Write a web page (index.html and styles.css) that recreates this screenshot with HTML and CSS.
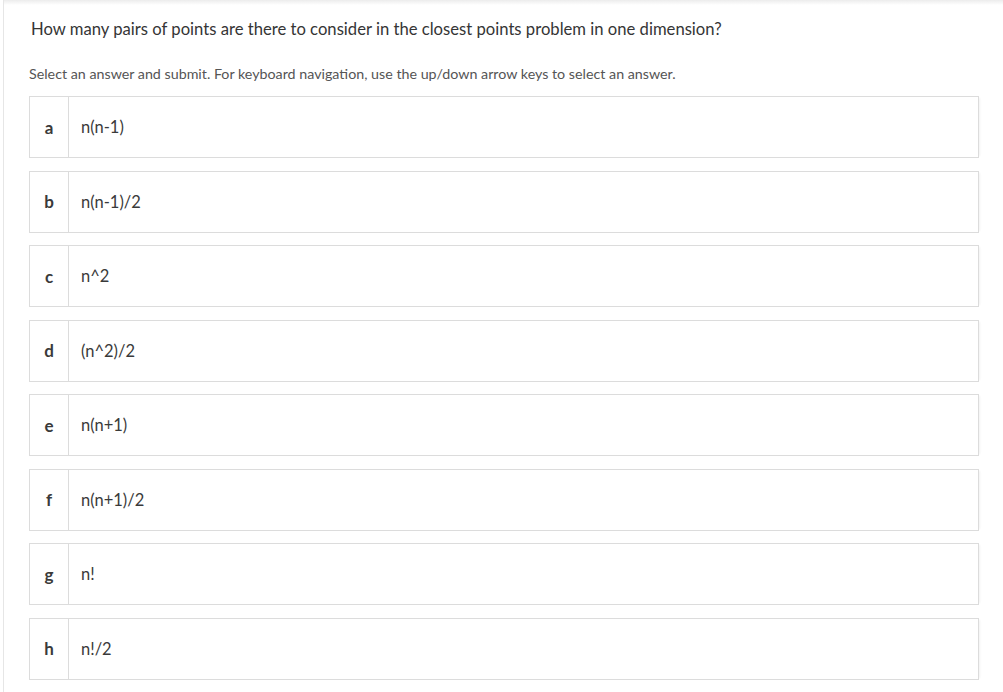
FILE: index.html
```html
<!DOCTYPE html>
<html>
<head>
<meta charset="utf-8">
<link rel="stylesheet" href="styles.css">
</head>
<body>
<div class="frame">
  <div class="topshade"></div>
  <div class="content">
    <p class="question">How many pairs of points are there to consider in the closest points problem in one dimension?</p>
    <p class="hint">Select an answer and submit. For keyboard navigation, use the up/down arrow keys to select an answer.</p>
    <ul class="options">
      <li class="option"><span class="letter">a</span><span class="answer">n(n-1)</span></li>
      <li class="option"><span class="letter">b</span><span class="answer">n(n-1)/2</span></li>
      <li class="option"><span class="letter">c</span><span class="answer">n^2</span></li>
      <li class="option"><span class="letter">d</span><span class="answer">(n^2)/2</span></li>
      <li class="option"><span class="letter">e</span><span class="answer">n(n+1)</span></li>
      <li class="option"><span class="letter">f</span><span class="answer">n(n+1)/2</span></li>
      <li class="option"><span class="letter">g</span><span class="answer">n!</span></li>
      <li class="option"><span class="letter">h</span><span class="answer">n!/2</span></li>
    </ul>
  </div>
</div>
</body>
</html>
```
FILE: styles.css
```css
html, body {
  margin: 0;
  padding: 0;
  background: #fff;
}
body {
  font-family: Lato, "Open Sans", sans-serif;
  color: #333;
  overflow: hidden;
}
.frame {
  position: relative;
  margin-left: 3px;
  border-left: 1px solid #e6e6e6;
  height: 692px;
}
.topshade {
  position: absolute;
  left: 0;
  right: 0;
  top: 0;
  height: 5px;
  background: linear-gradient(#ececec, #fff);
}
.content {
  padding: 0 24px 0 25px;
}
.question {
  margin: 0;
  padding-top: 19px;
  padding-left: 2px;
  font-size: 16.65px;
  line-height: 20px;
  color: #353535;
}
.hint {
  margin: 0;
  padding-top: 26px;
  font-size: 14.27px;
  line-height: 18px;
  color: #555;
}
.options {
  list-style: none;
  margin: 13px 0 0 0;
  padding: 0;
  display: flex;
  flex-direction: column;
  gap: 12.57px;
}
.option {
  display: flex;
  height: 60px;
  border: 1px solid #dcdcdc;
  box-shadow: 3px 0 2px -2px #f2f2f2;
}
.letter {
  width: 38px;
  flex: none;
  border-right: 1px solid #dcdcdc;
  display: flex;
  align-items: center;
  justify-content: center;
  font-size: 17px;
  font-weight: bold;
  color: #3a3a3a;
}
.answer {
  display: flex;
  align-items: center;
  padding-left: 12px;
  font-size: 16.5px;
  color: #3a3a3a;
}
```
